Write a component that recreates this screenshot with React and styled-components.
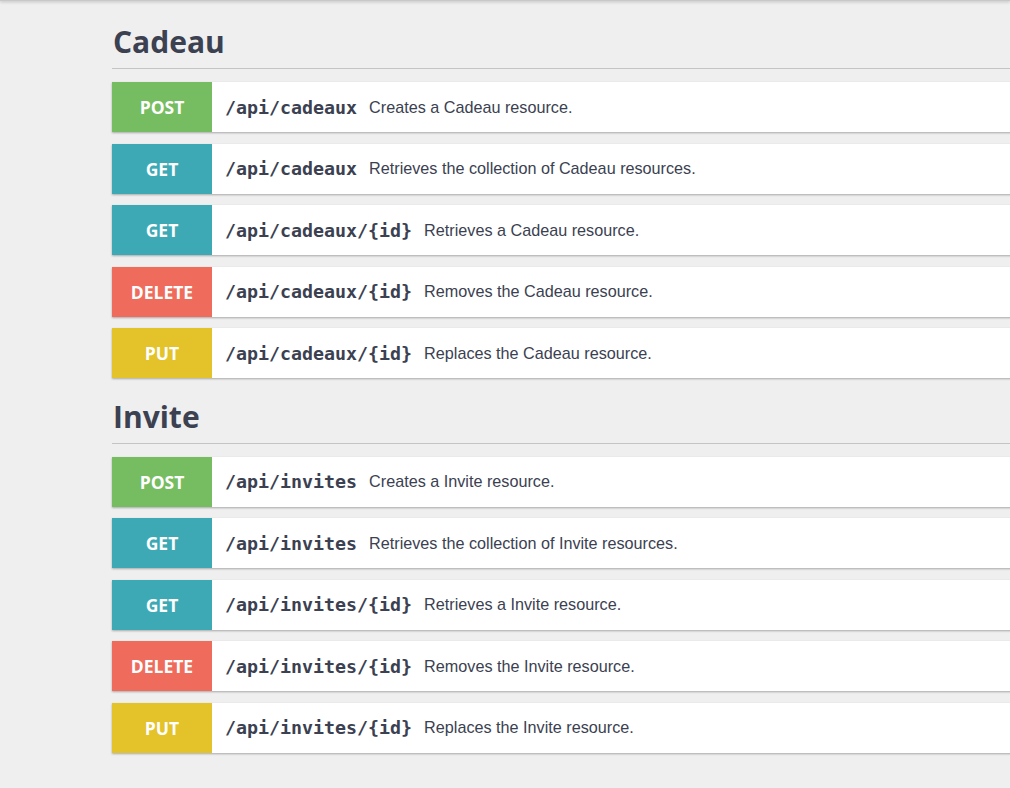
import styled, { createGlobalStyle } from "styled-components";

const GlobalStyle = createGlobalStyle`
  html, body {
    margin: 0;
    padding: 0;
    background: #efefef;
    overflow: hidden;
  }
  body {
    font-family: "Open Sans", "Liberation Sans", sans-serif;
    color: #3b4151;
  }
`;

const METHOD_COLORS = {
  POST: "#76bc60",
  GET: "#3ca9b5",
  DELETE: "#ef6b5b",
  PUT: "#e4c229",
};

const resources = [
  {
    name: "Cadeau",
    ops: [
      { method: "POST", path: "/api/cadeaux", desc: "Creates a Cadeau resource." },
      { method: "GET", path: "/api/cadeaux", desc: "Retrieves the collection of Cadeau resources." },
      { method: "GET", path: "/api/cadeaux/{id}", desc: "Retrieves a Cadeau resource." },
      { method: "DELETE", path: "/api/cadeaux/{id}", desc: "Removes the Cadeau resource." },
      { method: "PUT", path: "/api/cadeaux/{id}", desc: "Replaces the Cadeau resource." },
    ],
  },
  {
    name: "Invite",
    ops: [
      { method: "POST", path: "/api/invites", desc: "Creates a Invite resource." },
      { method: "GET", path: "/api/invites", desc: "Retrieves the collection of Invite resources." },
      { method: "GET", path: "/api/invites/{id}", desc: "Retrieves a Invite resource." },
      { method: "DELETE", path: "/api/invites/{id}", desc: "Removes the Invite resource." },
      { method: "PUT", path: "/api/invites/{id}", desc: "Replaces the Invite resource." },
    ],
  },
];

export default function App() {
  return (
    <>
      <GlobalStyle />
      <TopEdge />
      <SWrapper>
        {resources.map((r) => (
          <SSection key={r.name}>
            <STitle>{r.name}</STitle>
            {r.ops.map((op, i) => (
              <SOperation key={i}>
                <SMethod $method={op.method}>{op.method}</SMethod>
                <SPath>{op.path}</SPath>
                <SDesc>{op.desc}</SDesc>
              </SOperation>
            ))}
          </SSection>
        ))}
      </SWrapper>
    </>
  );
}

const TopEdge = styled.div`
  height: 1px;
  background: #c8c8c8;
  box-shadow: 0 1px 3px rgba(0, 0, 0, 0.35);
`;

const SWrapper = styled.div`
  padding-left: 112px;
  width: 1000px;
`;

const SSection = styled.section`
  padding-top: 24px;

  & + & {
    padding-top: 10px;
  }
`;

const STitle = styled.h2`
  margin: 0 0 13px;
  padding: 0 0 9px 1px;
  font-family: "Open Sans", sans-serif;
  font-size: 30px;
  font-weight: 700;
  line-height: 34px;
  color: #3b4151;
  border-bottom: 1px solid #c4c4c8;
`;

const SOperation = styled.div`
  display: flex;
  align-items: center;
  height: 50px;
  margin-bottom: 11.5px;
  background: #fff;
  box-shadow: 0 1px 2px rgba(0, 0, 0, 0.3);
`;

const SMethod = styled.div`
  flex: 0 0 100px;
  align-self: stretch;
  display: flex;
  align-items: center;
  justify-content: center;
  background: ${(p) => METHOD_COLORS[p.$method]};
  color: #fff;
  font-family: "Open Sans", sans-serif;
  font-weight: 700;
  font-size: 17.5px;
`;

const SPath = styled.span`
  margin-left: 13px;
  font-family: "DejaVu Sans Mono", monospace;
  font-weight: 700;
  font-size: 18.3px;
  color: #3b4151;
`;

const SDesc = styled.span`
  margin-left: 12px;
  font-family: "Liberation Sans", Arial, sans-serif;
  font-size: 16.2px;
  color: #3b4151;
`;
